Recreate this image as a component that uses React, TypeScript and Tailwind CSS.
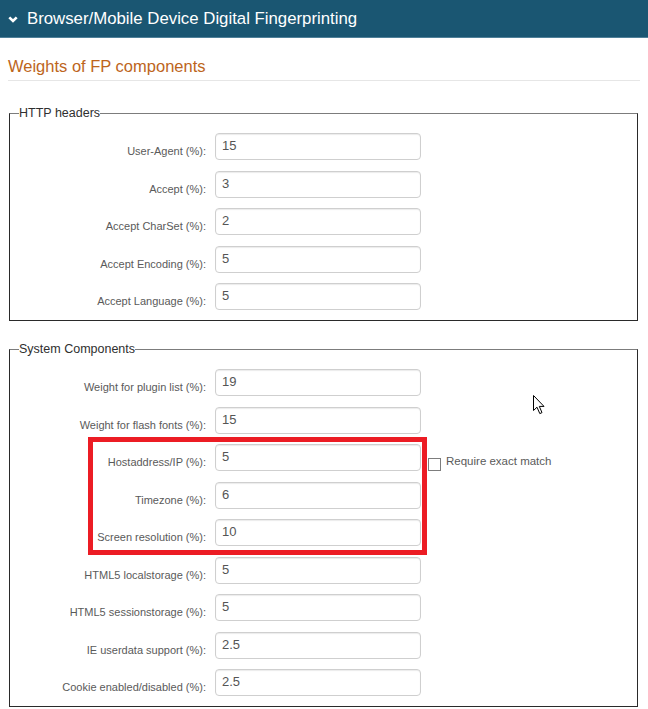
const httpRows = [
  { label: "User-Agent (%):", value: "15" },
  { label: "Accept (%):", value: "3" },
  { label: "Accept CharSet (%):", value: "2" },
  { label: "Accept Encoding (%):", value: "5" },
  { label: "Accept Language (%):", value: "5" },
];

const topSystemRows = [
  { label: "Weight for plugin list (%):", value: "19" },
  { label: "Weight for flash fonts (%):", value: "15" },
];

const markedRows = [
  { label: "Hostaddress/IP (%):", value: "5", exact: true },
  { label: "Timezone (%):", value: "6" },
  { label: "Screen resolution (%):", value: "10" },
];

const bottomSystemRows = [
  { label: "HTML5 localstorage (%):", value: "5" },
  { label: "HTML5 sessionstorage (%):", value: "5" },
  { label: "IE userdata support (%):", value: "2.5" },
  { label: "Cookie enabled/disabled (%):", value: "2.5" },
];

type Row = { label: string; value: string; exact?: boolean };

const FieldRow = ({ row }: { row: Row }) => (
  <div className="flex items-start h-[27px]">
    <label className="w-[196px] mt-[12px] text-right text-[11px] leading-[13px] text-[#5a5a5a]">{row.label}</label>
    <input
      readOnly
      value={row.value}
      className="ml-[9px] w-[206px] h-[27px] rounded-[4px] border border-[#cfcfcf] bg-white pl-[6px] pb-[2px] text-[13px] text-[#555] shadow-[inset_0_1px_1px_rgba(0,0,0,0.08)] outline-none"
    />
    {row.exact && (
      <div className="ml-[7px] mt-[11px] flex items-start">
        <span className="mt-[3px] w-[13px] h-[13px] border border-[#7d7d7d] bg-white" />
        <span className="ml-[5px] text-[11.5px] leading-[13px] text-[#5a5a5a]">Require exact match</span>
      </div>
    )}
  </div>
);

const Group = ({ title, children }: { title: string; children: React.ReactNode }) => (
  <fieldset className="ml-[1px] mr-[2px] border border-[#2a2a2a] border-t-[#7c7c7c] pb-[10px]">
    <legend className="ml-[9px] p-0 text-[12.5px] leading-[16px] text-[#2f2f2f]">{title}</legend>
    <div className="mt-[12px] flex flex-col gap-[10.5px]">{children}</div>
  </fieldset>
);

export default function App() {
  return (
    <div className="relative min-h-[709px] w-[648px] bg-white font-['Liberation_Sans',Arial,sans-serif]">
      <div className="flex h-[38px] items-center border-b border-[#4f8099] bg-[#1a5672] text-white">
        <svg width="10" height="7" viewBox="0 0 10 7" className="ml-[8px] mt-[1px]">
          <polyline points="1.3,1.3 5,5 8.7,1.3" fill="none" stroke="white" strokeWidth="2.6" />
        </svg>
        <span className="ml-[9px] text-[16.8px]">Browser/Mobile Device Digital Fingerprinting</span>
      </div>

      <div className="px-[8px]">
        <div className="mt-[18px] border-b border-[#e6e6e6] pb-[4px] text-[16.5px] leading-[20px] text-[#bd651c]">
          Weights of FP components
        </div>

        <div className="mt-[24px]">
          <Group title="HTTP headers">
            {httpRows.map((r) => (
              <FieldRow key={r.label} row={r} />
            ))}
          </Group>
        </div>

        <div className="mt-[20px]">
          <Group title="System Components">
            {topSystemRows.map((r) => (
              <FieldRow key={r.label} row={r} />
            ))}
            <div className="relative flex flex-col gap-[10.5px]">
              {markedRows.map((r) => (
                <FieldRow key={r.label} row={r} />
              ))}
              <div className="pointer-events-none absolute left-[78px] top-[-7px] bottom-[-9px] w-[339px] border-[5px] border-[#ec1c24]" />
            </div>
            {bottomSystemRows.map((r) => (
              <FieldRow key={r.label} row={r} />
            ))}
          </Group>
        </div>
      </div>

      <svg width="13" height="20" viewBox="0 0 13 20" className="absolute left-[533px] top-[395px]">
        <path d="M0.5 0.5 L0.5 15.5 L4 12.2 L6.8 18.6 L9 17.6 L6.3 11.4 L11 11.4 Z" fill="white" stroke="black" strokeWidth="1" strokeLinejoin="miter" />
      </svg>
    </div>
  );
}
